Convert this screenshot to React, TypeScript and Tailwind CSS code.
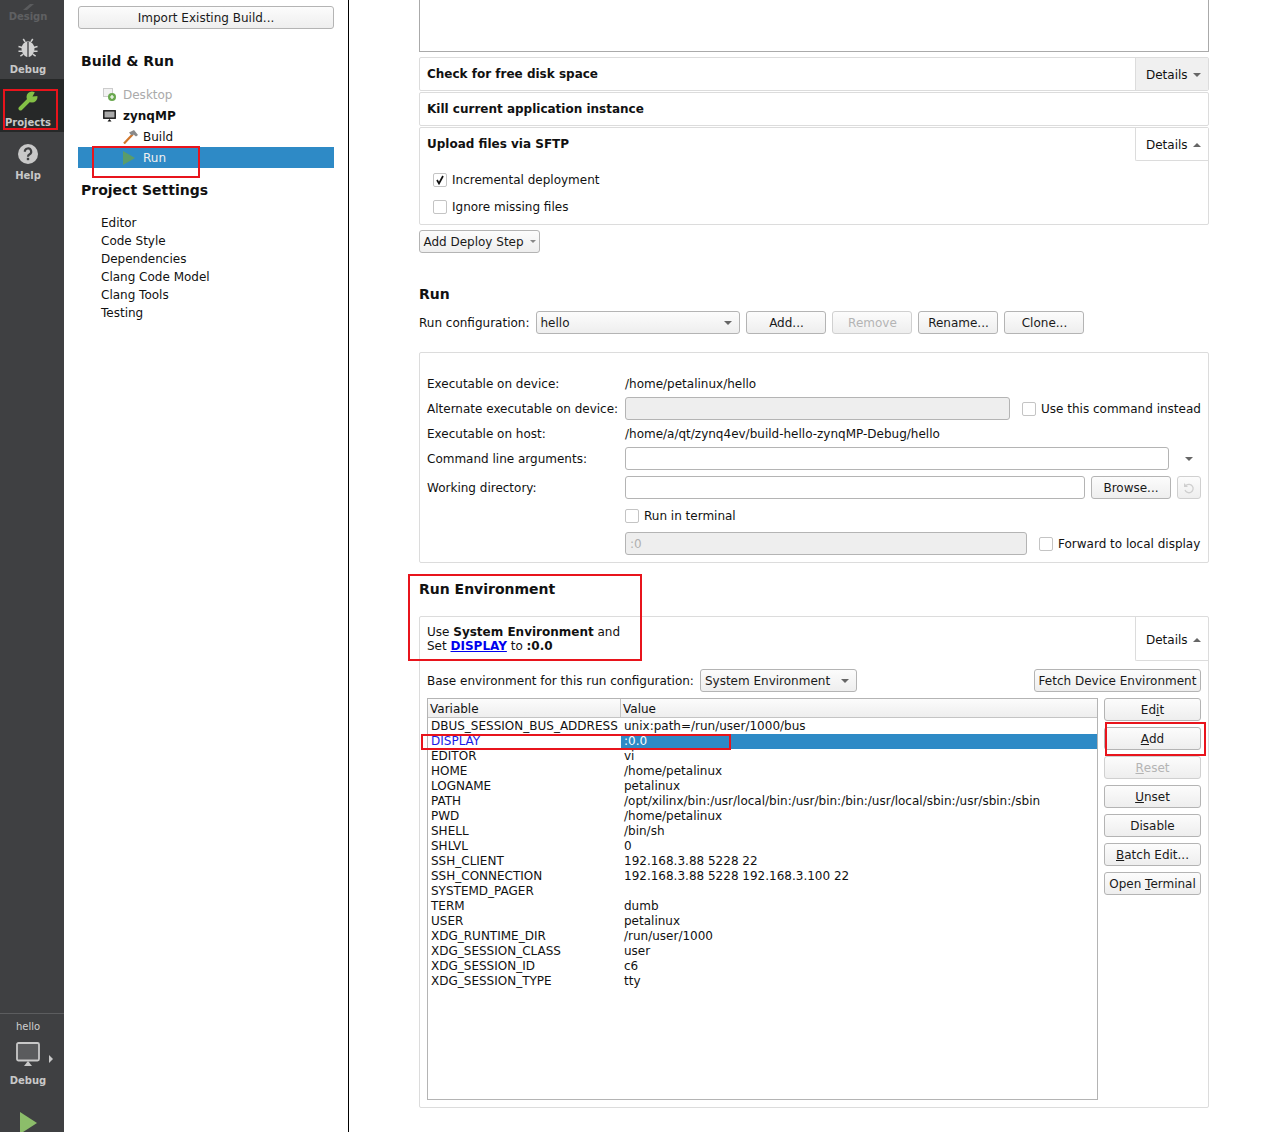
import type { ReactNode } from "react";

const envRows = [
  ["DBUS_SESSION_BUS_ADDRESS", "unix:path=/run/user/1000/bus"],
  ["DISPLAY", ":0.0"],
  ["EDITOR", "vi"],
  ["HOME", "/home/petalinux"],
  ["LOGNAME", "petalinux"],
  ["PATH", "/opt/xilinx/bin:/usr/local/bin:/usr/bin:/bin:/usr/local/sbin:/usr/sbin:/sbin"],
  ["PWD", "/home/petalinux"],
  ["SHELL", "/bin/sh"],
  ["SHLVL", "0"],
  ["SSH_CLIENT", "192.168.3.88 5228 22"],
  ["SSH_CONNECTION", "192.168.3.88 5228 192.168.3.100 22"],
  ["SYSTEMD_PAGER", ""],
  ["TERM", "dumb"],
  ["USER", "petalinux"],
  ["XDG_RUNTIME_DIR", "/run/user/1000"],
  ["XDG_SESSION_CLASS", "user"],
  ["XDG_SESSION_ID", "c6"],
  ["XDG_SESSION_TYPE", "tty"],
];

function Btn({ children, className = "", disabled = false }: { children: ReactNode; className?: string; disabled?: boolean }) {
  return (
    <div
      className={`flex h-[23px] shrink-0 items-center justify-center whitespace-nowrap rounded-[3px] border bg-gradient-to-b from-[#fcfcfc] to-[#eeeeee] ${
        disabled ? "border-[#d0d0d0] text-[#b4b4b4]" : "border-[#b4b4b4] text-[#1a1a1a]"
      } ${className}`}
    >
      {children}
    </div>
  );
}

function Check({ checked = false }: { checked?: boolean }) {
  return (
    <span className="flex h-[14px] w-[14px] shrink-0 items-center justify-center rounded-[2px] border border-[#c4c4c4] bg-white">
      {checked && (
        <svg width="10" height="10" viewBox="0 0 10 10">
          <path d="M2 5 L4 8.5 L8 1" fill="none" stroke="#111" strokeWidth="1.7" />
        </svg>
      )}
    </span>
  );
}

function Caret({ up = false, small = false }: { up?: boolean; small?: boolean }) {
  return (
    <svg width={small ? 6 : 8} height={small ? 3 : 4} viewBox="0 0 8 4" className="shrink-0">
      <path d={up ? "M0 4 L4 0 L8 4 Z" : "M0 0 L8 0 L4 4 Z"} fill={small ? "#888" : "#666"} />
    </svg>
  );
}

function Details({ up = false, shaded = false }: { up?: boolean; shaded?: boolean }) {
  return (
    <div
      className={`flex w-[73px] shrink-0 items-center gap-[5px] border-l border-[#dcdcdc] pl-[10px] pt-[2px] ${
        shaded ? "h-[32px] bg-[#f0f0f0]" : "h-[33px] rounded-bl-[2px] border-b bg-white"
      }`}
    >
      Details <Caret up={up} />
    </div>
  );
}

function SideItem({ icon, label, className = "" }: { icon: ReactNode; label: string; className?: string }) {
  return (
    <div className={`flex w-[64px] flex-col items-center pr-[8px] ${className}`}>
      {icon}
      <span className="text-[10px] font-bold leading-[13px]">{label}</span>
    </div>
  );
}

function Sidebar() {
  return (
    <div className="flex h-full w-[64px] shrink-0 flex-col bg-[#3f4042] text-[#c8c8c8]">
      <SideItem
        className="h-[36px] justify-end pb-[13px] text-[#5f6062]"
        label="Design"
        icon={
          <svg width="14" height="6" viewBox="0 0 14 6">
            <path d="M2 6 L9 0 H13 L6 6 Z" fill="#5a5b5d" />
          </svg>
        }
      />
      <SideItem
        className="h-[43px] pt-[2px]"
        label="Debug"
        icon={
          <svg width="20" height="20" viewBox="0 0 20 21" className="mb-[5px]">
            <path d="M5 6 Q10 1 15 6 Q18 10 16 15 Q14 20 10 20 Q6 20 4 15 Q2 10 5 6 Z" fill="#d2d2d2" />
            <path d="M10 4 V20" stroke="#3f4042" strokeWidth="1.4" />
            <path d="M5 1 L7 4 M15 1 L13 4 M0 9 L4 10 M20 9 L16 10 M0 14 H4 M20 14 H16 M2 19 L5 17 M18 19 L15 17" stroke="#d2d2d2" strokeWidth="1.6" />
          </svg>
        }
      />
      <SideItem
        className="h-[53px] bg-[#262828] pt-[12px]"
        label="Projects"
        icon={
          <svg width="20" height="20" viewBox="0 0 20 20" className="mb-[5px]">
            <path d="M2.5 17.5 L12 8" stroke="#84c046" strokeWidth="4" strokeLinecap="round" />
            <circle cx="14" cy="6" r="5.5" fill="#84c046" />
            <path d="M14.5 5.5 L17.5 0 L20 0 L20 5 Z" fill="#262828" />
          </svg>
        }
      />
      <SideItem
        className="h-[52px] pt-[12px]"
        label="Help"
        icon={
          <svg width="20" height="20" viewBox="0 0 22 22" className="mb-[5px]">
            <circle cx="11" cy="11" r="11" fill="#c8c8c8" />
            <path d="M7.5 8.5 A3.5 3.5 0 1 1 12.5 11.5 Q11 12.3 11 14" fill="none" stroke="#3f4042" strokeWidth="2.4" />
            <rect x="9.7" y="15.2" width="2.6" height="2.6" fill="#3f4042" />
          </svg>
        }
      />
      <div className="flex-1" />
      <div className="flex h-[119px] flex-col items-center overflow-hidden border-t border-[#5c5d5f] pr-[8px]">
        <span className="mt-[6px] text-[10px] leading-[13px] text-[#d0d0d0]">hello</span>
        <div className="relative mt-[9px] h-[25px] w-[56px] shrink-0">
          <svg width="24" height="24" viewBox="0 0 24 24" className="mx-auto">
            <rect x="1" y="1" width="22" height="17.5" rx="1.5" fill="#5a5b5d" stroke="#c8c8c8" strokeWidth="1.8" />
            <path d="M12 19 L16 24 H8 Z" fill="#c8c8c8" />
          </svg>
          <svg width="4" height="8" viewBox="0 0 4 8" className="absolute left-[49px] top-[13px]">
            <path d="M0 0 L4 4 L0 8 Z" fill="#c8c8c8" />
          </svg>
        </div>
        <span className="mt-[7px] shrink-0 text-[10px] font-bold leading-[13px]">Debug</span>
        <svg width="17" height="22" viewBox="0 0 17 22" className="mt-[25px] shrink-0">
          <path d="M0 0 L17 11 L0 22 Z" fill="#8cbd6a" />
        </svg>
      </div>
    </div>
  );
}

function Tree() {
  return (
    <div className="flex h-full w-[285px] shrink-0 flex-col border-r border-black bg-white pl-[14px] pr-[14px] text-[#111]">
      <Btn className="mt-[6px]">Import Existing Build...</Btn>
      <div className="mt-[23px] pl-[3px] text-[14px] font-bold leading-[18px]">Build &amp; Run</div>
      <div className="mt-[14px] flex h-[21px] items-center pl-[25px] text-[#aaa]">
        <svg width="14" height="14" viewBox="0 0 14 14" className="mr-[6px]">
          <rect x="0.5" y="0.5" width="9" height="8" fill="#f2f2f2" stroke="#ccc" />
          <circle cx="9" cy="9" r="4" fill="#6aa84f" />
          <path d="M7 9 H11 M9 7 V11" stroke="#fff" strokeWidth="1.2" />
        </svg>
        Desktop
      </div>
      <div className="flex h-[21px] items-center pl-[25px] font-bold">
        <svg width="13" height="12" viewBox="0 0 13 12" className="mr-[7px]">
          <rect x="0.8" y="0.8" width="11.4" height="7.4" fill="#aaa" stroke="#111" strokeWidth="1.4" />
          <path d="M6.5 9 L8.5 11.5 H4.5 Z" fill="#111" />
        </svg>
        zynqMP
      </div>
      <div className="flex h-[21px] items-center pl-[45px]">
        <svg width="15" height="14" viewBox="0 0 15 14" className="mr-[5px]">
          <path d="M1 13.5 L10 4" stroke="#d2762a" strokeWidth="2.2" />
          <path d="M6 2.5 L11 0 L15 5 L13 6.5 L10.5 4.5 L8.5 5.5 Z" fill="#8a8a8a" />
        </svg>
        Build
      </div>
      <div className="flex h-[21px] items-center bg-[#2e8ac6] pl-[45px] text-[#f0f0f0]">
        <svg width="12" height="14" viewBox="0 0 12 14" className="mr-[8px]">
          <path d="M0 0 L12 7 L0 14 Z" fill="#5a9c6a" />
        </svg>
        Run
      </div>
      <div className="mt-[13px] pl-[3px] text-[14px] font-bold leading-[18px]">Project Settings</div>
      <div className="mt-[15px] flex flex-col pl-[23px] leading-[18px]">
        {["Editor", "Code Style", "Dependencies", "Clang Code Model", "Clang Tools", "Testing"].map((s) => (
          <div key={s}>{s}</div>
        ))}
      </div>
    </div>
  );
}

function StepCard({ title, details }: { title: string; details?: "closed" }) {
  return (
    <div className="mb-px flex h-[34px] items-start justify-between rounded-[2px] border border-[#dcdcdc] bg-white">
      <div className="pl-[7px] pt-[8px] text-[12px] font-bold leading-[16px]">{title}</div>
      {details && <Details shaded />}
    </div>
  );
}

function RunRow({ label, children, className = "" }: { label: string; children: ReactNode; className?: string }) {
  return (
    <div className={`flex items-center ${className}`}>
      <span className="w-[198px] shrink-0">{label}</span>
      {children}
    </div>
  );
}

function Field({ className = "", disabled = false, children }: { className?: string; disabled?: boolean; children?: ReactNode }) {
  return (
    <div
      className={`flex h-[23px] items-center rounded-[3px] border border-[#b4b4b4] px-[4px] text-[#b0b0b0] ${
        disabled ? "bg-[#eeeeee]" : "bg-white"
      } ${className}`}
    >
      {children}
    </div>
  );
}

function RunCard() {
  return (
    <div className="mt-[18px] flex h-[211px] flex-col rounded-[2px] border border-[#dcdcdc] pl-[7px] pr-[7px] pt-[18px]">
      <RunRow label="Executable on device:" className="h-[25px]">/home/petalinux/hello</RunRow>
      <RunRow label="Alternate executable on device:" className="h-[25px]">
        <Field disabled className="w-[385px]" />
        <span className="ml-[12px] flex items-center gap-[5px] whitespace-nowrap"><Check />Use this command instead</span>
      </RunRow>
      <RunRow label="Executable on host:" className="h-[25px]">/home/a/qt/zynq4ev/build-hello-zynqMP-Debug/hello</RunRow>
      <RunRow label="Command line arguments:" className="h-[25px]">
        <Field className="w-[544px]" />
        <span className="ml-[16px]"><Caret /></span>
      </RunRow>
      <RunRow label="Working directory:" className="mt-[4px] h-[25px]">
        <Field className="w-[460px]" />
        <Btn className="ml-[6px] w-[80px]">Browse...</Btn>
        <Btn disabled className="ml-[6px] w-[24px]">
          <svg width="12" height="12" viewBox="0 0 12 12">
            <path d="M3 3.5 A4.2 4.2 0 1 1 2 8" fill="none" stroke="#cfcfcf" strokeWidth="1.3" />
            <path d="M1 1 L1 5 L5 5 Z" fill="#cfcfcf" />
          </svg>
        </Btn>
      </RunRow>
      <div className="mt-[3px] flex h-[25px] items-center gap-[5px] pl-[198px]"><Check />Run in terminal</div>
      <div className="mt-[4px] flex h-[23px] items-center pl-[198px]">
        <Field disabled className="w-[402px]">:0</Field>
        <span className="ml-[12px] flex items-center gap-[5px] whitespace-nowrap"><Check />Forward to local display</span>
      </div>
    </div>
  );
}

function EnvTable() {
  return (
    <div className="h-[402px] w-[671px] shrink-0 border border-[#b4b4b4] bg-white leading-[15px] text-[#111]">
      <div className="flex h-[19px] items-center border-b border-[#c4c4c4] bg-gradient-to-b from-[#fcfcfc] to-[#eeeeee]">
        <div className="h-full w-[193px] border-r border-[#c4c4c4] pl-[2px] leading-[20px]">Variable</div>
        <div className="h-full pl-[2px] leading-[20px]">Value</div>
      </div>
      <div className="pt-px">
        {envRows.map(([name, value]) => (
          <div key={name} className="flex h-[15px] whitespace-nowrap">
            <div className={`w-[193px] shrink-0 pl-[3px] ${name === "DISPLAY" ? "text-[#1a1ae6]" : ""}`}>{name}</div>
            <div className={`flex-1 pl-[3px] ${name === "DISPLAY" ? "bg-[#2e8ac6] text-white" : ""}`}>{value}</div>
          </div>
        ))}
      </div>
    </div>
  );
}

function EnvCard() {
  return (
    <div className="mt-[18px] h-[492px] rounded-[2px] border border-[#dcdcdc] bg-white">
      <div className="flex items-start justify-between">
        <div className="pl-[7px] pt-[8px] leading-[14px]">
          <div>Use <b>System Environment</b> and</div>
          <div>Set <a className="font-bold text-[#0000ee] underline">DISPLAY</a> to <b>:0.0</b></div>
        </div>
        <div className="flex h-[44px] w-[73px] items-center gap-[5px] rounded-bl-[2px] border-b border-l border-[#dcdcdc] pl-[10px] pt-[2px]">
          Details <Caret up />
        </div>
      </div>
      <div className="mt-[8px] flex h-[23px] items-center px-[7px]">
        <span>Base environment for this run configuration:</span>
        <Btn className="ml-[6px] w-[157px] !justify-between pl-[4px] pr-[7px]">System Environment <Caret /></Btn>
        <div className="flex-1" />
        <Btn className="w-[167px]">Fetch Device Environment</Btn>
      </div>
      <div className="mt-[6px] flex gap-[6px] pl-[7px]">
        <EnvTable />
        <div className="flex w-[97px] flex-col gap-[6px]">
          <Btn>Ed<u>i</u>t</Btn>
          <Btn><u>A</u>dd</Btn>
          <Btn disabled><u>R</u>eset</Btn>
          <Btn><u>U</u>nset</Btn>
          <Btn>Disable</Btn>
          <Btn><u>B</u>atch Edit...</Btn>
          <Btn><span>Open <u>T</u>erminal</span></Btn>
        </div>
      </div>
    </div>
  );
}

function Settings() {
  return (
    <div className="w-[790px] text-[#111]">
      <div className="mb-[5px] h-[52px] border border-t-0 border-[#aaaaaa] bg-white" />
      <StepCard title="Check for free disk space" details="closed" />
      <StepCard title="Kill current application instance" />
      <div className="h-[98px] rounded-[2px] border border-[#dcdcdc] bg-white">
        <div className="flex items-start justify-between">
          <div className="pl-[7px] pt-[8px] font-bold leading-[16px]">Upload files via SFTP</div>
          <Details up />
        </div>
        <div className="mt-[5px] flex h-[27px] items-center gap-[5px] pl-[13px]"><Check checked />Incremental deployment</div>
        <div className="flex h-[27px] items-center gap-[5px] pl-[13px]"><Check />Ignore missing files</div>
      </div>
      <Btn className="mt-[5px] w-[121px] gap-[6px]">Add Deploy Step <Caret small /></Btn>
      <div className="mt-[32px] text-[14px] font-bold leading-[18px]">Run</div>
      <div className="mt-[8px] flex h-[23px] items-center">
        <span className="whitespace-nowrap">Run configuration:</span>
        <Btn className="ml-[7px] w-[204px] !justify-between pl-[3px] pr-[7px]">hello <Caret /></Btn>
        <Btn className="ml-[6px] w-[80px]">Add...</Btn>
        <Btn disabled className="ml-[6px] w-[80px]">Remove</Btn>
        <Btn className="ml-[6px] w-[80px]">Rename...</Btn>
        <Btn className="ml-[6px] w-[80px]">Clone...</Btn>
      </div>
      <RunCard />
      <div className="mt-[17px] text-[14px] font-bold leading-[18px]">Run Environment</div>
      <EnvCard />
    </div>
  );
}

export default function App() {
  return (
    <div className="relative flex h-[1132px] w-[1261px] overflow-hidden bg-white font-['DejaVu_Sans',sans-serif] text-[12px] leading-[16px]">
      <Sidebar />
      <Tree />
      <div className="flex-1 overflow-hidden pl-[70px]">
        <Settings />
      </div>
      {/* red annotation boxes drawn over the screenshot */}
      <div className="absolute left-[3px] top-[89px] h-[41px] w-[55px] border-2 border-[#e8141c]" />
      <div className="absolute left-[92px] top-[146px] h-[32px] w-[108px] border-2 border-[#e8141c]" />
      <div className="absolute left-[408px] top-[574px] h-[87px] w-[234px] border-2 border-[#e8141c]" />
      <div className="absolute left-[421px] top-[734px] h-[16px] w-[310px] border-2 border-[#e8141c]" />
      <div className="absolute left-[1105px] top-[722px] h-[34px] w-[101px] border-2 border-[#e8141c]" />
    </div>
  );
}
